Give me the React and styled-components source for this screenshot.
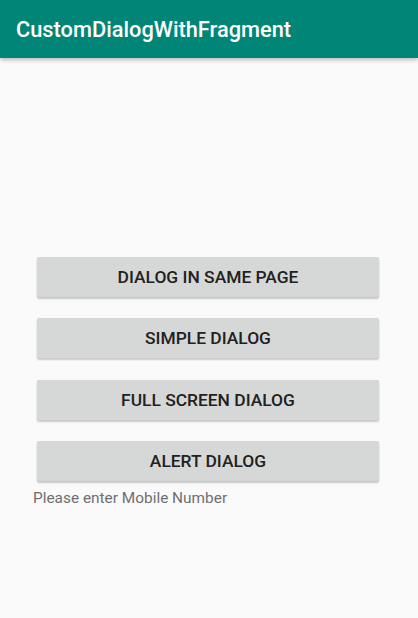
import React from 'react';
import styled, { createGlobalStyle } from 'styled-components';

const GlobalStyle = createGlobalStyle`
  html, body {
    margin: 0;
    padding: 0;
    background: #fafafa;
    font-family: Roboto, "Noto Sans", sans-serif;
    overflow: hidden;
  }
`;

// ** app bar */
const AppBar = styled.header`
  height: 58px;
  background-color: #008577;
  display: flex;
  align-items: center;
  padding-left: 16px;
  box-shadow: 0 2px 4px rgba(0, 0, 0, 0.25);
  position: relative;
  z-index: 1;
`;

const Title = styled.h1`
  margin: 0;
  color: #fff;
  font-size: 21.8px;
  font-weight: 500;
  letter-spacing: 0;
`;

const Page = styled.main`
  box-sizing: border-box;
  height: 560px;
  padding: 199px 39px 0 37px;
  display: flex;
  flex-direction: column;
  gap: 21.3px;
`;

const Button = styled.button`
  height: 40px;
  width: 100%;
  flex-shrink: 0;
  border: none;
  border-radius: 2px;
  background-color: #d6d7d7;
  color: #212121;
  font-family: Roboto, sans-serif;
  font-size: 17.4px;
  font-weight: 500;
  text-transform: uppercase;
  box-shadow: 0 2px 2px rgba(0, 0, 0, 0.2), 0 0 1px rgba(0, 0, 0, 0.1);
  cursor: pointer;
`;

const Hint = styled.p`
  margin: -14px 0 0 -4px;
  color: #6f6f6f;
  font-size: 15.4px;
  line-height: 20px;
`;

const buttons = ['Dialog in same page', 'Simple dialog', 'Full screen dialog', 'Alert dialog'];

const App = () => {
  return (
    <>
      <GlobalStyle />
      <AppBar>
        <Title>CustomDialogWithFragment</Title>
      </AppBar>
      <Page>
        {buttons.map((label) => (
          <Button key={label}>{label}</Button>
        ))}
        <Hint>Please enter Mobile Number</Hint>
      </Page>
    </>
  );
};

export default App;
